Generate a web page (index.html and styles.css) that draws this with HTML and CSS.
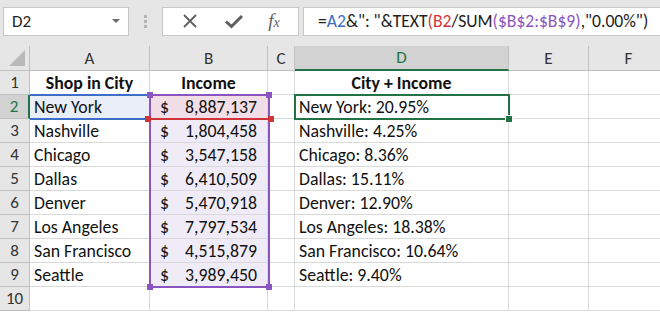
FILE: index.html
```html
<!DOCTYPE html>
<html lang="en">
<head>
    <meta charset="UTF-8">
    <title>Shop income</title>
    <link rel="stylesheet" href="styles.css">
</head>
<body>

<div class="toolbar">
    <div class="namebox">
        <span>D2</span>
        <span class="caret"></span>
    </div>
    <div class="grip"><i></i><i></i><i></i></div>
    <div class="fx-buttons">
        <svg width="18" height="18" viewBox="0 0 18 18"><path d="M3 3 L15 15 M15 3 L3 15" stroke="#5f5f5f" stroke-width="1.8" fill="none"/></svg>
        <svg width="20" height="18" viewBox="0 0 20 18"><path d="M2 9.5 L7.5 14.5 L18 4" stroke="#5f5f5f" stroke-width="3" fill="none"/></svg>
        <span class="fx">f<sub>x</sub></span>
    </div>
    <div class="formula">=<span class="ref-a">A2</span>&amp;": "&amp;TEXT<span class="ref-b">(B2</span>/SUM<span class="ref-c">($B$2:$B$9)</span>,"0.00%")</div>
</div>

<div class="sheet">
    <div class="hd corner"><span class="tri"></span></div>
    <div class="hd col">A</div>
    <div class="hd col">B</div>
    <div class="hd col">C</div>
    <div class="hd col active">D</div>
    <div class="hd col">E</div>
    <div class="hd col">F</div>

    <div class="hd row">1</div>
    <div class="c bold center">Shop in City</div>
    <div class="c bold center">Income</div>
    <div class="c"></div>
    <div class="c bold center">City + Income</div>
    <div class="c"></div>
    <div class="c"></div>

    <div class="hd row active">2</div>
    <div class="c fill-a">New York</div>
    <div class="c money fill-b"><span>$</span><span>8,887,137</span></div>
    <div class="c"></div>
    <div class="c">New York: 20.95%</div>
    <div class="c"></div>
    <div class="c"></div>

    <div class="hd row">3</div>
    <div class="c">Nashville</div>
    <div class="c money fill-c"><span>$</span><span>1,804,458</span></div>
    <div class="c"></div>
    <div class="c">Nashville: 4.25%</div>
    <div class="c"></div>
    <div class="c"></div>

    <div class="hd row">4</div>
    <div class="c">Chicago</div>
    <div class="c money fill-c"><span>$</span><span>3,547,158</span></div>
    <div class="c"></div>
    <div class="c">Chicago: 8.36%</div>
    <div class="c"></div>
    <div class="c"></div>

    <div class="hd row">5</div>
    <div class="c">Dallas</div>
    <div class="c money fill-c"><span>$</span><span>6,410,509</span></div>
    <div class="c"></div>
    <div class="c">Dallas: 15.11%</div>
    <div class="c"></div>
    <div class="c"></div>

    <div class="hd row">6</div>
    <div class="c">Denver</div>
    <div class="c money fill-c"><span>$</span><span>5,470,918</span></div>
    <div class="c"></div>
    <div class="c">Denver: 12.90%</div>
    <div class="c"></div>
    <div class="c"></div>

    <div class="hd row">7</div>
    <div class="c">Los Angeles</div>
    <div class="c money fill-c"><span>$</span><span>7,797,534</span></div>
    <div class="c"></div>
    <div class="c">Los Angeles: 18.38%</div>
    <div class="c"></div>
    <div class="c"></div>

    <div class="hd row">8</div>
    <div class="c">San Francisco</div>
    <div class="c money fill-c"><span>$</span><span>4,515,879</span></div>
    <div class="c"></div>
    <div class="c">San Francisco: 10.64%</div>
    <div class="c"></div>
    <div class="c"></div>

    <div class="hd row">9</div>
    <div class="c">Seattle</div>
    <div class="c money fill-c"><span>$</span><span>3,989,450</span></div>
    <div class="c"></div>
    <div class="c">Seattle: 9.40%</div>
    <div class="c"></div>
    <div class="c"></div>

    <div class="hd row">10</div>
    <div class="c"></div>
    <div class="c"></div>
    <div class="c"></div>
    <div class="c"></div>
    <div class="c"></div>
    <div class="c"></div>

    <!-- reference highlights drawn over the cells -->
    <div class="box box-a"></div>
    <div class="box box-c">
        <i class="h tl"></i><i class="h tr"></i><i class="h bl"></i><i class="h br"></i>
    </div>
    <div class="box box-b">
        <i class="h bl red"></i><i class="h br red"></i>
    </div>
    <div class="box box-sel"><i class="fill-handle"></i></div>
</div>

</body>
</html>
```

FILE: styles.css
```css
body {
    margin: 0;
    width: 660px;
    height: 314px;
    overflow: hidden;
    background-color: #ffffff;
    font-family: Carlito, Lato, "Open Sans", sans-serif;
}
.toolbar {
    display: flex;
    align-items: center;
    height: 46px;
    padding-left: 3px;
    background-color: #e6e6e6;
    box-sizing: border-box;
}
.namebox {
    display: flex;
    align-items: center;
    justify-content: space-between;
    width: 126px;
    height: 29px;
    margin-bottom: 4px;
    padding: 0 8px 0 8px;
    box-sizing: border-box;
    background-color: #fff;
    border: 1px solid #c6c6c6;
    font-size: 17px;
    color: #222;
}
.caret {
    width: 0;
    height: 0;
    border-left: 4px solid transparent;
    border-right: 4px solid transparent;
    border-top: 4px solid #6b6b6b;
}
.grip {
    display: flex;
    flex-direction: column;
    gap: 2px;
    margin: 0 15px 4px 15px;
}
.grip i {
    width: 3px;
    height: 3px;
    background-color: #b4b4b4;
}
.fx-buttons {
    display: flex;
    align-items: center;
    justify-content: space-around;
    width: 137px;
    height: 29px;
    margin-bottom: 4px;
    padding: 0 6px;
    box-sizing: border-box;
    background-color: #fff;
    border: 1px solid #c6c6c6;
}
.fx {
    font-family: "Liberation Serif", serif;
    font-style: italic;
    font-size: 19px;
    color: #5f5f5f;
}
.fx sub {
    font-size: 14px;
    vertical-align: 0;
}
.formula {
    flex: 1;
    height: 29px;
    line-height: 27px;
    margin: 0 0 4px 4px;
    padding-left: 14px;
    box-sizing: border-box;
    background-color: #fff;
    border: 1px solid #c6c6c6;
    border-right: none;
    font-size: 17.6px;
    color: #222;
    white-space: nowrap;
}
.ref-a { color: #3c6ec8; }
.ref-b { color: #d13438; }
.ref-c { color: #8a55c0; }

.sheet {
    position: relative;
    display: grid;
    grid-template-columns: 30px 120px 118px 27px 214px 80px 80px;
    grid-template-rows: 25px;
    grid-auto-rows: 24px;
    font-size: 17.8px;
    color: #111;
}
.hd {
    display: flex;
    align-items: center;
    justify-content: center;
    background-color: #e6e6e6;
    color: #333;
    font-size: 17px;
    box-sizing: border-box;
}
.col {
    border-right: 1px solid #c0c0c0;
    border-bottom: 1px solid #c0c0c0;
}
.row {
    border-right: 1px solid #c0c0c0;
    border-bottom: 1px solid #c0c0c0;
}
.hd.active {
    background-color: #d2d2d2;
    color: #217346;
}
.col.active {
    border-bottom: 2px solid #217346;
}
.row.active {
    border-right: 2px solid #217346;
}
.corner {
    justify-content: flex-end;
    align-items: flex-end;
    padding: 0 4px 4px 0;
    border-right: 1px solid #c0c0c0;
    border-bottom: 1px solid #c0c0c0;
}
.tri {
    width: 0;
    height: 0;
    border-left: 16px solid transparent;
    border-bottom: 16px solid #b9b9b9;
}
.c {
    display: flex;
    align-items: center;
    padding: 0 4px;
    box-sizing: border-box;
    border-right: 1px solid #d9d9d9;
    border-bottom: 1px solid #d9d9d9;
    white-space: nowrap;
    overflow: hidden;
}
.bold { font-weight: bold; }
.center { justify-content: center; }
.money {
    justify-content: space-between;
    padding: 0 10px 0 10px;
}
.fill-a { background-color: #e9eef8; }
.fill-b { background-color: #f1dee6; }
.fill-c { background-color: #f0ecf7; }

.box {
    position: absolute;
    box-sizing: border-box;
    pointer-events: none;
}
.box-a {
    left: 30px;
    top: 48px;
    width: 121px;
    height: 26px;
    border-top: 2px solid #3c6ec8;
    border-bottom: 2px solid #3c6ec8;
}
.box-c {
    left: 149px;
    top: 48px;
    width: 121px;
    height: 194px;
    border: 2px solid #8a55c0;
}
.box-b {
    left: 149px;
    top: 48px;
    width: 121px;
    height: 26px;
    border-bottom: 2px solid #d13438;
}
.h {
    position: absolute;
    width: 6px;
    height: 6px;
    background-color: #8a55c0;
}
.h.red { background-color: #d13438; }
.tl { left: -4px; top: -4px; }
.tr { right: -4px; top: -4px; }
.bl { left: -4px; bottom: -4px; }
.br { right: -4px; bottom: -4px; }
.box-sel {
    left: 294px;
    top: 48px;
    width: 216px;
    height: 26px;
    border: 2px solid #217346;
}
.fill-handle {
    position: absolute;
    right: -5px;
    bottom: -5px;
    width: 6px;
    height: 6px;
    background-color: #217346;
    border: 1px solid #fff;
}
```
